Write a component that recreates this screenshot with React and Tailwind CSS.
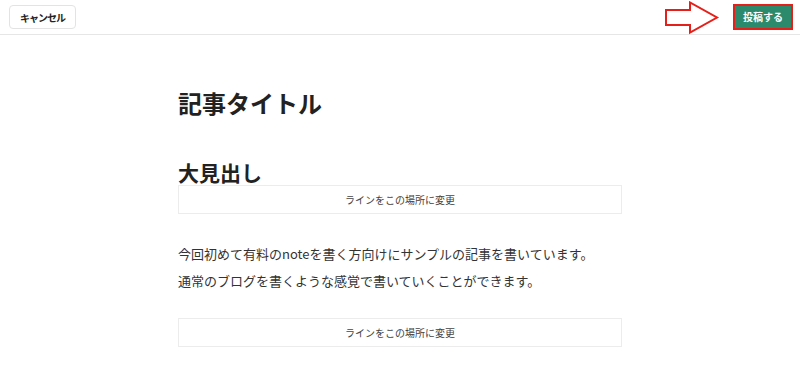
export default function App() {
  const font = { fontFamily: '"Noto Sans CJK JP", "Noto Sans", sans-serif' };
  return (
    <div className="w-[800px] h-[369px] bg-white overflow-hidden" style={font}>
      <header className="h-[35px] border-b border-[#e6e6e6] flex items-center justify-between pl-[9px] pr-[7px]">
        <button className="h-[24px] w-[67px] rounded-[4px] border border-[#e3e3e3] bg-white text-[10px] tracking-[-1px] font-bold text-[#222] flex items-center justify-center">
          キャンセル
        </button>
        <div className="flex items-center gap-[13px]">
          <svg width="56" height="34" viewBox="0 0 56 34" className="mt-[1px]">
            <polygon
              points="2,9 26,9 26,1.5 53,16.5 26,31.5 26,24 2,24"
              fill="white"
              stroke="#e5201a"
              strokeWidth="2"
              strokeLinejoin="miter"
            />
          </svg>
          <div className="h-[26px] w-[60px] border-[2px] border-[#e5201a] bg-[#2b8a6c] flex items-center justify-center">
            <span className="text-[10px] font-bold text-white leading-none">投稿する</span>
          </div>
        </div>
      </header>
      <main className="w-[444px] mx-auto">
        <h1 className="mt-[52px] text-[24px] leading-[32px] font-bold text-[#222]">記事タイトル</h1>
        <h2 className="mt-[40px] text-[21px] leading-[26px] font-bold text-[#222]">大見出し</h2>
        <div className="h-[29px] border border-[#ececec] flex items-center justify-center text-[10px] text-[#444]">
          ラインをこの場所に変更
        </div>
        <div className="mt-[26px] text-[13px] leading-[27px] text-[#333]">
          <p>今回初めて有料のnoteを書く方向けにサンプルの記事を書いています。</p>
          <p>通常のブログを書くような感覚で書いていくことができます。</p>
        </div>
        <div className="mt-[24px] h-[29px] border border-[#ececec] flex items-center justify-center text-[10px] text-[#444]">
          ラインをこの場所に変更
        </div>
      </main>
    </div>
  );
}
